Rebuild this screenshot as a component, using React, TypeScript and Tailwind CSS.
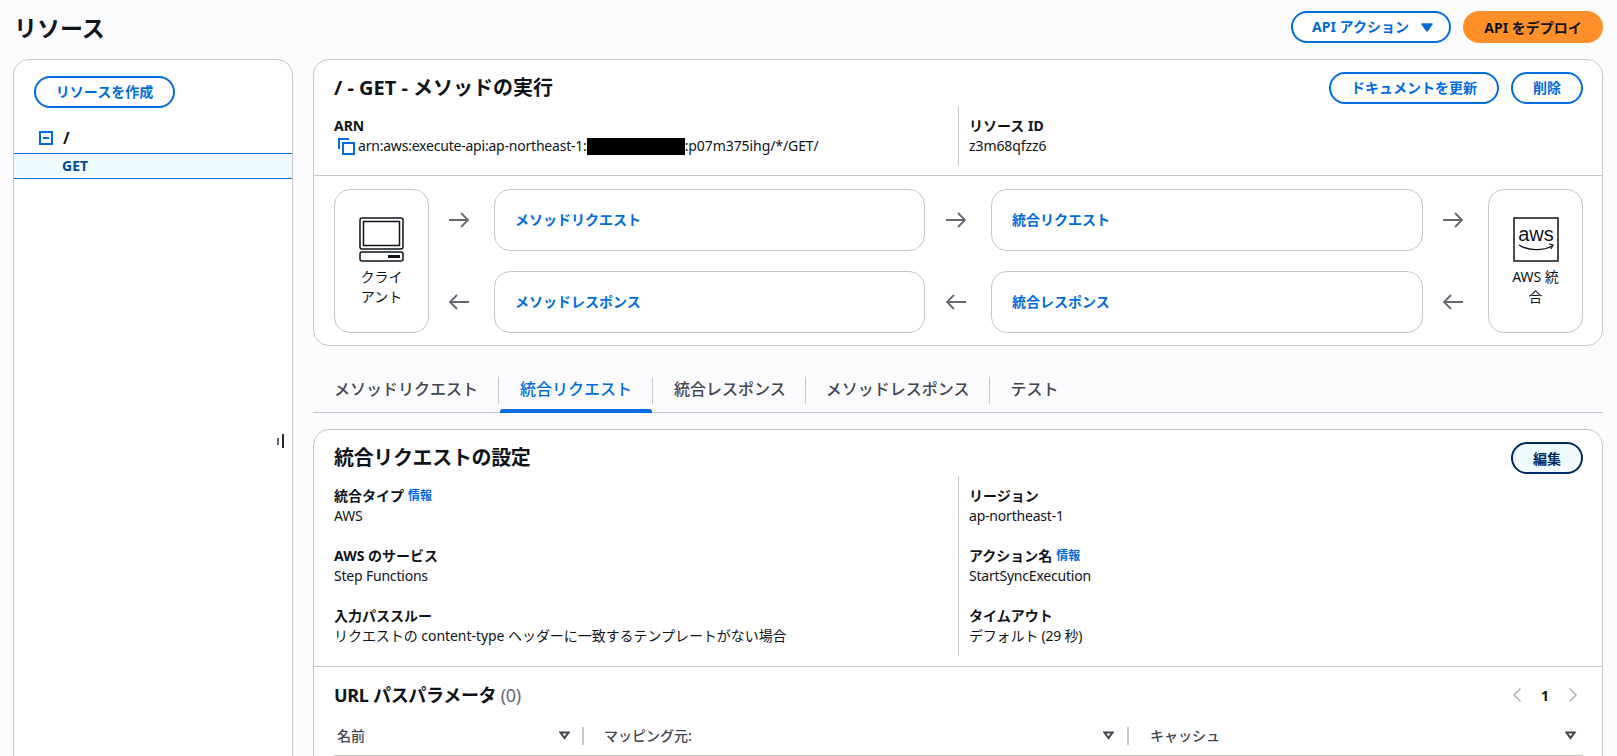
import React from "react";

const F = { fontFamily: '"Noto Sans","Noto Sans CJK JP",sans-serif' };

function Btn({ children, className = "" }: { children: React.ReactNode; className?: string }) {
  return (
    <button className={`h-[32px] rounded-full border-2 border-[#006ce0] bg-white text-[#006ce0] text-[14px] leading-[20px] font-bold flex items-center justify-center ${className}`}>
      {children}
    </button>
  );
}

function Arrow({ left = false }: { left?: boolean }) {
  return (
    <div className="flex-1 flex items-center justify-center pr-[5px]">
      <svg width="20" height="16" viewBox="0 0 20 16" fill="none" stroke="#656871" strokeWidth="1.8">
        {left ? <path d="M20 8H1M8 1L1 8l7 7" /> : <path d="M0 8h19M12 1l7 7-7 7" />}
      </svg>
    </div>
  );
}

function FlowBox({ children }: { children: React.ReactNode }) {
  return (
    <div className="h-[62px] w-full rounded-[16px] border border-[#c6c6cd] bg-white flex items-center pl-[20px] pb-[2px] text-[14px] font-bold text-[#006ce0]">
      {children}
    </div>
  );
}

function Field({ label, info, children }: { label: string; info?: boolean; children: React.ReactNode }) {
  return (
    <div className="h-[40px] text-[14px] leading-[20px] text-[#0f141a]">
      <div className="font-bold flex items-center gap-[4px]">
        {label}
        {info && <span className="text-[12px] text-[#006ce0] font-bold">情報</span>}
      </div>
      <div className="tracking-[-0.2px]">{children}</div>
    </div>
  );
}

function Sort() {
  return (
    <svg width="11" height="9" viewBox="0 0 11 9" fill="none" stroke="#424650" strokeWidth="2">
      <path d="M1.5 1.5h8L5.5 7z" />
    </svg>
  );
}

function Tab({ children, active, last, pad }: { children: React.ReactNode; active?: boolean; last?: boolean; pad: string }) {
  return (
    <div className={`relative h-[44px] flex items-center ${active ? "text-[#006ce0]" : "text-[#424650]"}`}>
      <div className={`h-[27px] pb-[2px] ${pad} flex items-center text-[16px] font-medium leading-[20px] ${last ? "" : "border-r border-[#c6c6cd]"}`}>
        {children}
      </div>
      {active && <div className="absolute left-[1px] right-[1px] bottom-[-1px] h-[4px] rounded-t-[3px] bg-[#006ce0]" />}
    </div>
  );
}

export default function App() {
  return (
    <div style={F} className="h-[756px] w-[1617px] overflow-hidden bg-[#fbfbfe] text-[#0f141a]">
      <div className="h-[59px] pl-[14px] pr-[14px] pt-[11px] flex justify-between">
        <h1 className="text-[23px] leading-[34px] font-bold">リソース</h1>
        <div className="flex gap-[12px]">
          <Btn className="w-[160px] gap-[12px] pl-[3px]">
            API アクション
            <svg width="12" height="9" viewBox="0 0 12 9"><path d="M1 1h10L6 8z" fill="#006ce0" stroke="#006ce0" strokeWidth="1.5" strokeLinejoin="round" /></svg>
          </Btn>
          <button className="w-[140px] h-[32px] rounded-full bg-[#ff9029] text-[14px] font-bold text-[#0f141a]">API をデプロイ</button>
        </div>
      </div>

      <div className="flex gap-[20px] pl-[13px]">
        <div className="relative w-[280px] h-[760px] shrink-0 rounded-[16px] border border-[#c6c6cd] bg-white">
          <div className="pl-[20px] pt-[16px]">
            <Btn className="w-[141px]">リソースを作成</Btn>
          </div>
          <div className="mt-[15px] h-[30px] pl-[25px] flex items-center gap-[10px]">
            <svg width="14" height="14" viewBox="0 0 14 14" fill="none" stroke="#006ce0" strokeWidth="2">
              <rect x="1" y="1" width="12" height="12" />
              <path d="M4 7h6" />
            </svg>
            <span className="text-[16px] font-bold">/</span>
          </div>
          <div className="h-[26px] border-y border-[#006ce0] bg-[#f0fbff] pl-[48px] pb-[2px] flex items-center text-[14px] font-bold text-[#004a9e]">GET</div>
          <div className="absolute left-[263px] top-[374px] flex items-center gap-[3px]">
            <div className="w-[2px] h-[7px] bg-[#656871]" />
            <div className="w-[2px] h-[14px] bg-[#232b37]" />
          </div>
        </div>

        <div className="w-[1290px] shrink-0">
          <div className="rounded-[16px] border border-[#c6c6cd] bg-white">
            <div className="h-[116px] border-b border-[#c6c6cd] pl-[20px] pr-[19px] pt-[12px]">
              <div className="flex justify-between items-center h-[32px]">
                <h2 className="text-[20px] leading-[28px] font-bold">/ - GET - メソッドの実行</h2>
                <div className="flex gap-[12px]">
                  <Btn className="w-[170px]">ドキュメントを更新</Btn>
                  <Btn className="w-[72px]">削除</Btn>
                </div>
              </div>
              <div className="grid grid-cols-[625px_1fr] mt-[2px] text-[14px] leading-[20px]">
                <div className="h-[60px] pt-[10px] border-r border-[#c6c6cd]">
                  <div className="font-bold">ARN</div>
                  <div className="flex items-center">
                    <svg className="ml-[4px] mr-[3px]" width="17" height="17" viewBox="0 0 17 17" fill="none" stroke="#006ce0" strokeWidth="2">
                      <path d="M1 11V1h10" />
                      <rect x="5" y="5" width="11" height="11" />
                    </svg>
                    <span className="tracking-[-0.21px]">arn:aws:execute-api:ap-northeast-1:</span>
                    <span className="inline-block w-[98px] h-[17px] bg-black" />
                    <span className="tracking-[-0.08px]">:p07m375ihg/*/GET/</span>
                  </div>
                </div>
                <div className="pt-[10px] pl-[10px]">
                  <div className="font-bold">リソース ID</div>
                  <div className="tracking-[-0.1px]">z3m68qfzz6</div>
                </div>
              </div>
            </div>
            <div className="pt-[13px] pb-[11px] pl-[20px] pr-[19px] flex h-[169px]">
              <div className="w-[95px] h-[144px] shrink-0 rounded-[16px] border border-[#c6c6cd] flex flex-col items-center pt-[27px] px-[20px] text-center text-[14px] leading-[20px]">
                <svg width="45" height="45" viewBox="0 0 45 45" fill="none" stroke="#0f141a">
                  <rect x="1" y="1" width="43" height="31" rx="2" strokeWidth="1.5" />
                  <rect x="4.5" y="4.5" width="36" height="24" strokeWidth="1.5" />
                  <rect x="1" y="35" width="43" height="9" rx="2" strokeWidth="1.5" />
                  <path d="M29 39.5h12" strokeWidth="3" />
                </svg>
                <div className="mt-[5px]">クライアント</div>
              </div>
              <div className="flex-1 flex">
                <div className="w-[65px] flex flex-col justify-between h-[144px]">
                  <div className="h-[62px] flex"><Arrow /></div>
                  <div className="h-[62px] flex"><Arrow left /></div>
                </div>
                <div className="w-[431px] flex flex-col justify-between h-[144px]">
                  <FlowBox>メソッドリクエスト</FlowBox>
                  <FlowBox>メソッドレスポンス</FlowBox>
                </div>
                <div className="w-[66px] flex flex-col justify-between h-[144px]">
                  <div className="h-[62px] flex"><Arrow /></div>
                  <div className="h-[62px] flex"><Arrow left /></div>
                </div>
                <div className="w-[432px] flex flex-col justify-between h-[144px]">
                  <FlowBox>統合リクエスト</FlowBox>
                  <FlowBox>統合レスポンス</FlowBox>
                </div>
                <div className="w-[65px] flex flex-col justify-between h-[144px]">
                  <div className="h-[62px] flex"><Arrow /></div>
                  <div className="h-[62px] flex"><Arrow left /></div>
                </div>
              </div>
              <div className="w-[95px] h-[144px] shrink-0 rounded-[16px] border border-[#c6c6cd] flex flex-col items-center pt-[27px] px-[20px] text-center text-[14px] leading-[20px]">
                <svg width="46" height="45" viewBox="0 0 46 45" fill="none">
                  <rect x="1" y="1" width="44" height="43" stroke="#0f141a" strokeWidth="1.5" />
                  <text x="23" y="24" textAnchor="middle" fontSize="20" fontFamily="Liberation Sans, sans-serif" fill="#0f141a">aws</text>
                  <path d="M6 28c9 6 24 6 33 1" stroke="#0f141a" strokeWidth="1.4" />
                  <path d="M36 27l4 1-2 4" stroke="#0f141a" strokeWidth="1.2" />
                </svg>
                <div className="mt-[5px]">AWS 統合</div>
              </div>
            </div>
          </div>

          <div className="mt-[22px] flex border-b border-[#c6c6cd] h-[45px]">
            <Tab pad="pl-[21px] pr-[20px]">メソッドリクエスト</Tab>
            <Tab active pad="pl-[21px] pr-[20px]">統合リクエスト</Tab>
            <Tab pad="pl-[21px] pr-[19px]">統合レスポンス</Tab>
            <Tab pad="pl-[20px] pr-[20px]">メソッドレスポンス</Tab>
            <Tab last pad="pl-[20px] pr-[20px]">テスト</Tab>
          </div>

          <div className="mt-[16px] rounded-t-[16px] border border-[#c6c6cd] bg-white h-[400px]">
            <div className="h-[237px] border-b border-[#c6c6cd] pl-[20px] pr-[19px] pt-[12px]">
              <div className="flex justify-between items-center h-[32px]">
                <h2 className="text-[20px] leading-[28px] font-bold tracking-[-0.35px]">統合リクエストの設定</h2>
                <button className="w-[72px] h-[32px] rounded-full border-2 border-[#002a66] bg-[#f0fbff] text-[14px] font-bold text-[#002a66]">編集</button>
              </div>
              <div className="grid grid-cols-[625px_1fr] mt-[2px]">
                <div className="h-[180px] pt-[10px] border-r border-[#c6c6cd] flex flex-col gap-[20px]">
                  <Field label="統合タイプ" info>AWS</Field>
                  <Field label="AWS のサービス">Step Functions</Field>
                  <Field label="入力パススルー"><span className="tracking-[-0.05px]">リクエストの content-type ヘッダーに一致するテンプレートがない場合</span></Field>
                </div>
                <div className="pt-[10px] pl-[10px] flex flex-col gap-[20px]">
                  <Field label="リージョン">ap-northeast-1</Field>
                  <Field label="アクション名" info>StartSyncExecution</Field>
                  <Field label="タイムアウト">デフォルト (29 秒)</Field>
                </div>
              </div>
            </div>
            <div className="pl-[20px] pr-[19px] pt-[15px]">
              <div className="flex items-center justify-between h-[26px]">
                <div className="text-[18px] leading-[26px] font-bold tracking-[-0.3px]">URL パスパラメータ <span className="font-normal text-[#656871]">(0)</span></div>
                <div className="flex items-center pr-[5px] gap-[19px]">
                  <svg width="10" height="16" viewBox="0 0 10 16" fill="none" stroke="#b4b4bb" strokeWidth="1.6"><path d="M8.5 1.5L2 8l6.5 6.5" /></svg>
                  <span className="text-[14px] font-bold">1</span>
                  <svg width="10" height="16" viewBox="0 0 10 16" fill="none" stroke="#b4b4bb" strokeWidth="1.6"><path d="M1.5 1.5L8 8l-6.5 6.5" /></svg>
                </div>
              </div>
              <div className="mt-[11px] h-[37px] pb-[3px] border-b border-[#c6c6cd] grid grid-cols-[250px_545px_1fr] items-center text-[14px] font-medium text-[#424650]">
                <div className="flex items-center justify-between h-[18px] pl-[3px] pr-[12px] border-r-2 border-[#c6c6cd]"><span>名前</span><Sort /></div>
                <div className="flex items-center justify-between h-[18px] pl-[20px] pr-[13px] border-r-2 border-[#c6c6cd]"><span>マッピング元:</span><Sort /></div>
                <div className="flex items-center justify-between h-[18px] pl-[21px] pr-[7px]"><span>キャッシュ</span><Sort /></div>
              </div>
            </div>
          </div>
        </div>
      </div>
    </div>
  );
}
